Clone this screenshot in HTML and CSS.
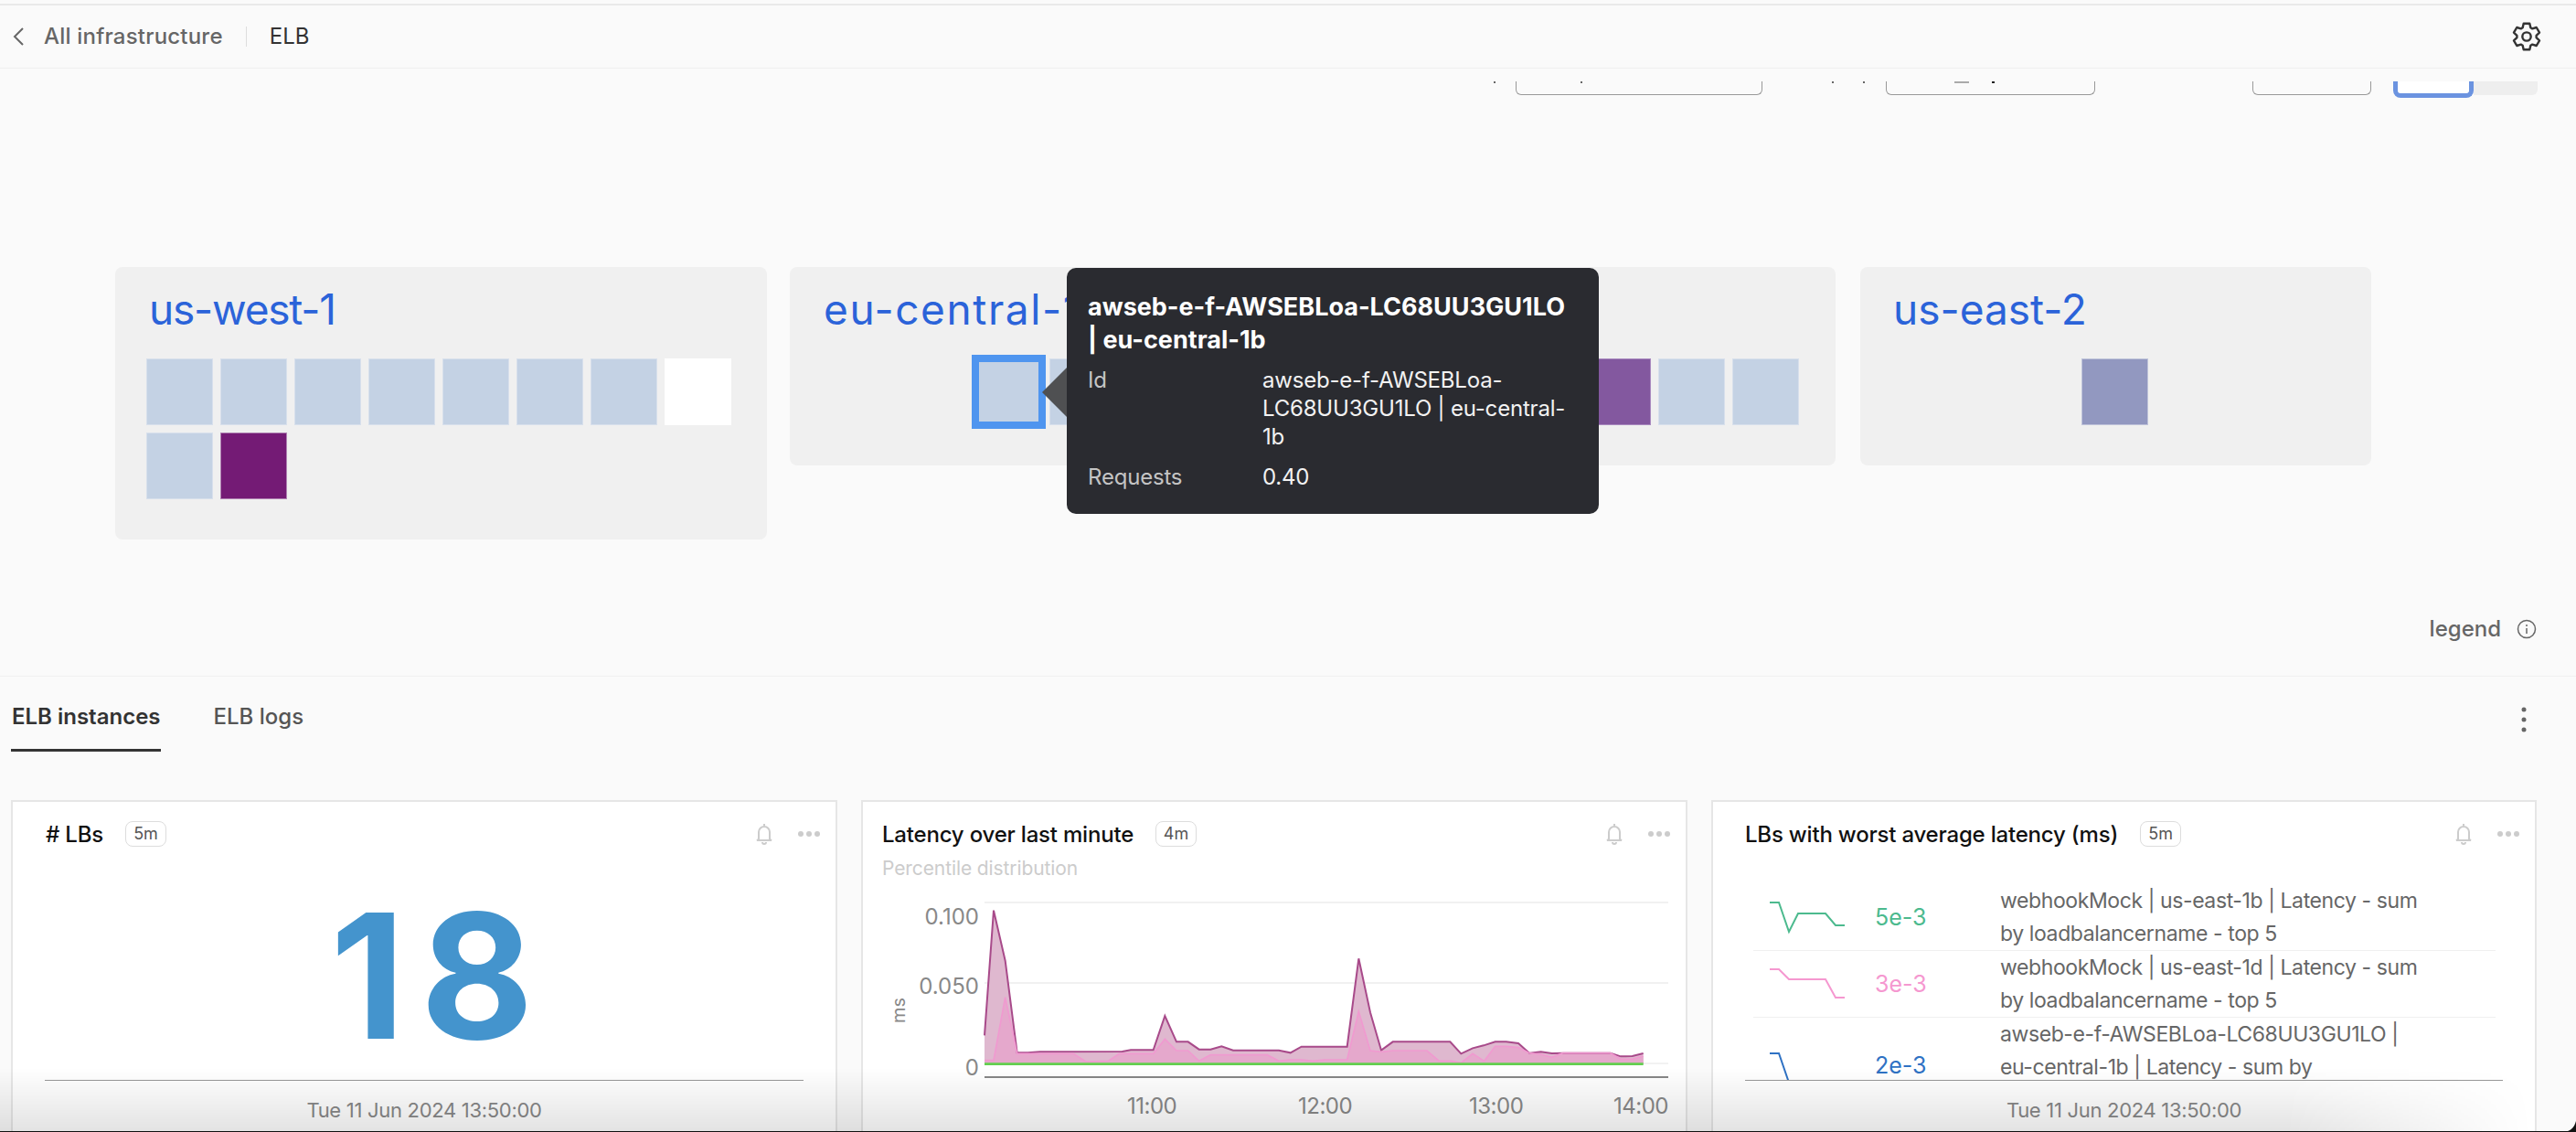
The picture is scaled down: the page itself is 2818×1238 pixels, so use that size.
FILE: index.html
```html
<!DOCTYPE html>
<html lang="en">
<head>
<meta charset="UTF-8">
<meta name="viewport" content="width=device-width, initial-scale=1.0">
<title>ELB</title>
<link rel="stylesheet" href="styles.css">
</head>
<body>
  <div class="page">
    <header class="topbar">
      <svg class="back" width="14" height="20" viewBox="0 0 14 20"><path d="M12 1 3 10l9 9" /></svg>
      <a class="crumb">All infrastructure</a>
      <span class="crumb-sep"></span>
      <span class="crumb-current">ELB</span>
      <svg class="gear" width="32" height="32" viewBox="0 0 24 24"><path d="M9.53 1.28H14.47L15.25 4.69 16.7 5.53 20.04 4.5 22.52 8.78 19.96 11.16V12.84L22.52 15.22 20.04 19.5 16.7 18.47 15.25 19.31 14.47 22.72H9.53L8.75 19.31 7.3 18.47 3.96 19.5 1.48 15.22 4.04 12.84V11.16L1.48 8.78 3.96 4.5 7.3 5.53 8.75 4.69z"/><circle cx="12" cy="12" r="3.5"/></svg>
    </header>

    <div class="toolbar">
      <div class="field field-a"></div>
      <div class="field field-b"></div>
      <div class="field field-c"></div>
      <span class="tick tick-a"></span>
      <span class="tick tick-d"></span>
      <span class="tick tick-b"></span>
      <span class="tick tick-c"></span>
      <span class="tick tick-e"></span>
      <span class="tick tick-f"></span>
      <div class="toggle"><span class="toggle-on"></span><span class="toggle-off"></span></div>
    </div>

    <section class="map">
      <div class="region region-west">
        <h2>us-west-1</h2>
        <div class="cells">
          <i class="cell"></i><i class="cell"></i><i class="cell"></i><i class="cell"></i>
          <i class="cell"></i><i class="cell"></i><i class="cell"></i><i class="cell cell-white"></i>
          <i class="cell"></i><i class="cell cell-purple"></i>
        </div>
      </div>
      <div class="region region-central">
        <h2>eu-central-1</h2>
        <div class="cells-split">
          <div class="cells-group">
            <i class="cell cell-active"></i><i class="cell"></i>
          </div>
          <div class="cells-group">
            <i class="cell cell-mid"></i><i class="cell"></i><i class="cell"></i>
          </div>
        </div>
        <div class="tooltip">
          <span class="tooltip-arrow"></span>
          <div class="tooltip-title">awseb-e-f-AWSEBLoa-LC68UU3GU1LO | eu-central-1b</div>
          <div class="tooltip-row">
            <span class="tooltip-key">Id</span>
            <span>awseb-e-f-AWSEBLoa-LC68UU3GU1LO | eu-central-1b</span>
          </div>
          <div class="tooltip-row">
            <span class="tooltip-key">Requests</span>
            <span>0.40</span>
          </div>
        </div>
      </div>
      <div class="region region-east">
        <h2>us-east-2</h2>
        <div class="cells-center"><i class="cell cell-slate"></i></div>
      </div>
      <div class="legend">
        legend
        <svg width="22" height="22" viewBox="0 0 22 22"><circle cx="11" cy="11" r="9.5"/><path d="M11 10v6M11 6v2"/></svg>
      </div>
    </section>

    <nav class="tabs">
      <a class="tab tab-active">ELB instances</a>
      <a class="tab">ELB logs</a>
      <svg class="kebab" width="8" height="30" viewBox="0 0 8 30"><circle cx="4" cy="4" r="2.5"/><circle cx="4" cy="15" r="2.5"/><circle cx="4" cy="26" r="2.5"/></svg>
    </nav>

    <section class="cards">
      <article class="card card-count">
        <div class="card-head">
          <span class="card-title">#&nbsp;LBs</span>
          <span class="badge">5m</span>
          <svg class="bell" width="20" height="24" viewBox="0 0 20 24"><path d="M10 1v2M4 18V10a6 6 0 0 1 12 0v8l2 1H2zM8 21a2 2 0 0 0 4 0"/></svg>
          <span class="dots"><i></i><i></i><i></i></span>
        </div>
        <div class="big-number">18</div>
        <div class="stamp">Tue 11 Jun 2024 13:50:00</div>
      </article>

      <article class="card card-chart">
        <div class="card-head">
          <span class="card-title">Latency over last minute</span>
          <span class="badge">4m</span>
          <svg class="bell" width="20" height="24" viewBox="0 0 20 24"><path d="M10 1v2M4 18V10a6 6 0 0 1 12 0v8l2 1H2zM8 21a2 2 0 0 0 4 0"/></svg>
          <span class="dots"><i></i><i></i><i></i></span>
        </div>
        <div class="card-sub">Percentile distribution</div>
        <div class="chart">
          <span class="y-title">ms</span>
          <div class="y-labels">
            <span>0.100</span>
            <span>0.050</span>
            <span>0</span>
          </div>
          <div class="plot">
            <svg class="plot-svg" width="748" height="195" viewBox="48 84 2244 585">
              <path class="grid" d="M48 84H2292M48 348H2292"/>
              <path class="grid-zero" d="M48 612H2292"/>
              <polygon class="area-top" points="48,614 48,520 78,110 116,275 155,577 190,577 230,574 500,573 528,568 602,568 640,456 678,541 716,541 752,566 790,566 826,556 864,569 1014,569 1052,577 1088,557 1238,557 1276,268 1314,445 1350,569 1388,541 1576,541 1612,580 1650,562 1686,553 1724,541 1760,541 1800,546 1836,578 1874,574 1910,579 1946,578 2102,578 2136,589 2174,588 2210,579 2210,614"/>
              <polygon class="area-low" points="48,614 48,602 78,602 116,395 155,580 190,580 340,580 380,606 454,604 490,580 602,580 640,532 678,570 716,570 752,604 790,584 976,584 1014,604 1052,600 1088,600 1126,604 1164,600 1238,600 1276,442 1314,570 1350,574 1388,570 1500,570 1540,604 1580,604 1612,610 1650,580 1688,604 1724,556 1760,556 1800,560 1836,578 1874,582 1910,592 1946,578 2102,578 2136,598 2174,598 2210,588 2210,614"/>
              <polyline class="line-top" points="48,520 78,110 116,275 155,577 190,577 230,574 500,573 528,568 602,568 640,456 678,541 716,541 752,566 790,566 826,556 864,569 1014,569 1052,577 1088,557 1238,557 1276,268 1314,445 1350,569 1388,541 1576,541 1612,580 1650,562 1686,553 1724,541 1760,541 1800,546 1836,578 1874,574 1910,579 1946,578 2102,578 2136,589 2174,588 2210,579"/>
              <polyline class="line-low" points="48,602 78,602 116,395 155,580 190,580 340,580 380,606 454,604 490,580 602,580 640,532 678,570 716,570 752,604 790,584 976,584 1014,604 1052,600 1088,600 1126,604 1164,600 1238,600 1276,442 1314,570 1350,574 1388,570 1500,570 1540,604 1580,604 1612,610 1650,580 1688,604 1724,556 1760,556 1800,560 1836,578 1874,582 1910,592 1946,578 2102,578 2136,598 2174,598 2210,588"/>
              <path class="line-green" d="M48 614H2210"/>
            </svg>
            <div class="x-labels">
              <span>11:00</span><span>12:00</span><span>13:00</span><span>14:00</span>
            </div>
          </div>
        </div>
      </article>

      <article class="card card-list">
        <div class="card-head">
          <span class="card-title">LBs with worst average latency (ms)</span>
          <span class="badge">5m</span>
          <svg class="bell" width="20" height="24" viewBox="0 0 20 24"><path d="M10 1v2M4 18V10a6 6 0 0 1 12 0v8l2 1H2zM8 21a2 2 0 0 0 4 0"/></svg>
          <span class="dots"><i></i><i></i><i></i></span>
        </div>
        <div class="list">
          <div class="list-row">
            <svg class="spark spark-green" width="82" height="34" viewBox="0 0 82 34"><polyline points="0,1 10,1 21,33 31,13 61,13 72,26 82,26"/></svg>
            <span class="list-value value-green">5e-3</span>
            <span class="list-name">webhookMock | us-east-1b | Latency - sum by loadbalancername - top 5</span>
          </div>
          <div class="list-row">
            <svg class="spark spark-pink" width="82" height="34" viewBox="0 0 82 34"><polyline points="0,1 10,1 21,12 61,12 72,32 82,32"/></svg>
            <span class="list-value value-pink">3e-3</span>
            <span class="list-name">webhookMock | us-east-1d | Latency - sum by loadbalancername - top 5</span>
          </div>
          <div class="list-row">
            <svg class="spark spark-blue" width="82" height="34" viewBox="0 0 82 34"><polyline points="0,1 10,1 21,33 82,33"/></svg>
            <span class="list-value value-blue">2e-3</span>
            <span class="list-name">awseb-e-f-AWSEBLoa-LC68UU3GU1LO |<br>eu-central-1b | Latency - sum by</span>
          </div>
        </div>
        <div class="stamp">Tue 11 Jun 2024 13:50:00</div>
      </article>
    </section>

    <div class="fade"></div>
    <svg class="corner" width="15" height="12" viewBox="0 0 15 12"><path d="M15 0v12H0C8 12 13 8 15 0z"/></svg>
  </div>
</body>
</html>
```

FILE: styles.css
```css
* {
  box-sizing: border-box;
}

html,
body {
  margin: 0;
  padding: 0;
}

body {
  font-family: Inter, "Liberation Sans", sans-serif;
  background: #fafafa;
  color: #333;
}

.page {
  position: relative;
  width: 2818px;
  height: 1238px;
  overflow: hidden;
  padding-top: 4px;
  background: #fafafa;
}

/* top bar */
.topbar {
  display: flex;
  align-items: center;
  height: 71px;
  padding: 0 38px 1px 13px;
  border-top: 2px solid #e9e9e9;
  border-bottom: 1px solid #efefef;
}

.back {
  margin-right: 21px;
}

.back path {
  fill: none;
  stroke: #666;
  stroke-width: 2;
}

.crumb {
  font-size: 24px;
  letter-spacing: 0.2px;
  color: #666;
  font-weight: 500;
}

.crumb-sep {
  width: 1px;
  height: 22px;
  margin: 0 25px;
  background: #ddd;
}

.crumb-current {
  font-size: 24px;
  color: #333;
  font-weight: 400;
}

.gear {
  margin-left: auto;
}

.gear path,
.gear circle {
  fill: none;
  stroke: #333;
  stroke-width: 1.8;
  stroke-linejoin: round;
}

/* toolbar, mostly scrolled out of view */
.toolbar {
  position: relative;
  height: 33px;
}

.toolbar .field,
.toolbar .toggle {
  position: absolute;
  top: 14px;
}

.field {
  height: 15px;
  border: 1px solid #999;
  border-top: 0;
  border-radius: 0 0 6px 6px;
}

.field-a {
  left: 1658px;
  width: 270px;
}

.field-b {
  left: 2063px;
  width: 229px;
}

.field-c {
  left: 2464px;
  width: 130px;
}

.tick {
  position: absolute;
  top: 14px;
  width: 2px;
  height: 2px;
  background: #666;
}

.tick-a {
  left: 1634px;
}

.tick-d {
  left: 1729px;
}

.tick-b {
  left: 2004px;
}

.tick-c {
  left: 2038px;
}

.tick-e {
  left: 2138px;
  width: 16px;
  background: #aaa;
}

.tick-f {
  left: 2179px;
  width: 3px;
  background: #222;
}

.toggle {
  left: 2618px;
  display: flex;
  align-items: flex-start;
}

.toggle-on {
  width: 88px;
  height: 18px;
  border: 5px solid #6b93e0;
  border-top: 0;
  border-radius: 0 0 8px 8px;
  background: #fff;
}

.toggle-off {
  width: 70px;
  height: 15px;
  border-radius: 0 0 6px 0;
  background: #eee;
}

/* region map */
.map {
  position: relative;
  display: flex;
  align-items: flex-start;
  height: 632px;
  padding: 184px 0 0 126px;
  border-bottom: 1px solid #f0f0f0;
}

.region {
  position: relative;
  flex: none;
  padding: 18px 0 0 34px;
  border-radius: 8px;
  background: #f0f0f0;
}

.region h2 {
  margin: 0;
  font-size: 46px;
  line-height: 56px;
  font-weight: 400;
  color: #2b63d9;
}

.region-west {
  width: 713px;
  height: 298px;
  margin-right: 25px;
  padding-left: 37px;
}

.region-west h2 {
  letter-spacing: -1.2px;
}

.region-central {
  width: 1144px;
  height: 217px;
  margin-right: 27px;
  padding-left: 37px;
}

.region-central h2 {
  letter-spacing: 1.6px;
}

.region-east {
  width: 559px;
  height: 217px;
  padding-left: 36px;
}

.cells {
  display: flex;
  flex-wrap: wrap;
  gap: 8px;
  width: 640px;
  margin: 26px 0 0 -3px;
}

.cell {
  display: block;
  flex: none;
  width: 73px;
  height: 73px;
  background: #c4d2e4;
  border: 1px solid #d8e0ec;
}

.cell-white {
  background: #fff;
  border-color: #fff;
}

.cell-purple {
  background: #741b75;
  border-color: #b083b3;
}

.cell-mid {
  background: #83589f;
  border-color: #a98abf;
}

.cell-slate {
  background: #9298c0;
  border-color: #c0c4da;
}

.cell-active {
  outline: 8px solid #4f95ef;
  outline-offset: -4px;
}

.cells-split {
  display: flex;
  justify-content: space-between;
  margin: 26px 40px 0 166px;
}

.cells-group {
  display: flex;
  gap: 8px;
}

.cells-center {
  display: flex;
  margin-top: 26px;
  padding-left: 206px;
}

/* tooltip over the central region */
.tooltip {
  position: absolute;
  left: 303px;
  top: 1px;
  z-index: 2;
  width: 582px;
  height: 269px;
  padding: 25px 30px 0 23px;
  border-radius: 10px;
  background: #2a2b30;
  color: #f2f2f2;
  font-size: 24px;
  letter-spacing: -0.2px;
}

.tooltip-arrow {
  position: absolute;
  left: -27px;
  top: 109px;
  border-style: solid;
  border-width: 27px 27px 27px 0;
  border-color: transparent #4f5052 transparent transparent;
}

.tooltip-title {
  margin-bottom: 10px;
  font-size: 27px;
  line-height: 36px;
  letter-spacing: 0;
  font-weight: 700;
  color: #fff;
}

.tooltip-row {
  display: grid;
  grid-template-columns: 191px 1fr;
  margin-bottom: 13px;
  line-height: 31px;
}

.tooltip-key {
  color: #c4c4c4;
}

.legend {
  position: absolute;
  right: 43px;
  top: 565px;
  display: flex;
  align-items: center;
  gap: 17px;
  font-size: 24px;
  font-weight: 500;
  color: #666;
}

.legend svg {
  fill: none;
  stroke: #666;
  stroke-width: 1.5;
}

/* tabs */
.tabs {
  position: relative;
  display: flex;
  align-items: flex-start;
  gap: 58px;
  height: 135px;
  padding: 29px 0 0 12px;
}

.tab {
  height: 53px;
  font-size: 24px;
  line-height: 30px;
  font-weight: 500;
  color: #555;
}

.tab-active {
  padding-left: 1px;
  font-weight: 600;
  color: #333;
  border-bottom: 3px solid #333;
}

.kebab {
  margin: 3px 53px 0 auto;
  fill: #666;
}

/* cards */
.cards {
  display: grid;
  grid-template-columns: 904px 904px 903px;
  column-gap: 26px;
  padding-left: 12px;
}

.card {
  position: relative;
  height: 380px;
  background: #fff;
  border: 2px solid #e6e6e6;
  border-bottom: 0;
  overflow: hidden;
}

.card-head {
  display: flex;
  align-items: center;
  height: 28px;
  margin-top: 21px;
  padding-right: 17px;
}

.card-count .card-head {
  padding-left: 36px;
}

.card-chart .card-head,
.card-chart .card-sub {
  padding-left: 21px;
}

.card-list .card-head {
  padding-left: 35px;
}

.card-title {
  font-size: 24px;
  letter-spacing: -0.2px;
  font-weight: 500;
  color: #111;
}

.badge {
  width: 45px;
  height: 28px;
  margin-left: 24px;
  border: 1px solid #ddd;
  border-radius: 8px;
  font-size: 18px;
  line-height: 26px;
  text-align: center;
  color: #555;
}

.bell {
  margin-left: auto;
  fill: none;
  stroke: #ccc;
  stroke-width: 2;
}

.dots {
  display: flex;
  gap: 3px;
  margin-left: 27px;
}

.dots i {
  width: 6px;
  height: 6px;
  border-radius: 50%;
  background: #ccc;
}

.card-sub {
  margin-top: 10px;
  font-size: 21px;
  line-height: 28px;
  letter-spacing: -0.1px;
  color: #ccc;
}

.big-number {
  margin-top: 38px;
  height: 206px;
  padding-left: 34px;
  font-size: 190px;
  line-height: 206px;
  letter-spacing: 17px;
  font-weight: 700;
  text-align: center;
  color: #4494cd;
}

.stamp {
  position: absolute;
  left: 35px;
  right: 35px;
  top: 304px;
  height: 70px;
  padding-top: 18px;
  border-top: 1px solid #999;
  background: #fff;
  font-size: 22px;
  line-height: 28px;
  letter-spacing: -0.3px;
  text-align: center;
  color: #888;
}

/* line chart */
.chart {
  position: relative;
  display: flex;
  height: 240px;
  margin-top: 23px;
}

.y-title {
  position: absolute;
  left: 25px;
  top: 106px;
  transform: rotate(-90deg);
  font-size: 20px;
  color: #888;
}

.y-labels {
  position: relative;
  width: 133px;
}

.y-labels span {
  position: absolute;
  right: 6px;
  font-size: 24px;
  line-height: 30px;
  color: #888;
}

.y-labels span:nth-child(1) {
  top: 1px;
}

.y-labels span:nth-child(2) {
  top: 77px;
}

.y-labels span:nth-child(3) {
  top: 166px;
}

.plot {
  width: 748px;
}

.plot-svg {
  display: block;
  overflow: visible;
}

.grid {
  fill: none;
  stroke: #f1f1f1;
  stroke-width: 6;
}

.grid-zero {
  fill: none;
  stroke: #e4e4e4;
  stroke-width: 3;
}

.area-top {
  fill: #dfb8cf;
}

.area-low {
  fill: #e5a8cc;
}

.line-top {
  fill: none;
  stroke: #a84a8a;
  stroke-width: 6;
}

.line-low {
  fill: none;
  stroke: #f09ad0;
  stroke-width: 5;
}

.line-green {
  fill: none;
  stroke: #63cf4f;
  stroke-width: 8;
}

.x-labels {
  position: relative;
  height: 40px;
  margin-top: 8px;
  font-size: 24px;
  line-height: 30px;
  letter-spacing: -0.5px;
  color: #888;
}

.x-labels::before {
  content: "";
  position: absolute;
  left: 0;
  right: 0;
  top: -13px;
  height: 2px;
  background: #888;
}

.x-labels span {
  position: absolute;
  top: 5px;
}

.x-labels span:nth-child(1) {
  left: 156px;
}

.x-labels span:nth-child(2) {
  left: 343px;
}

.x-labels span:nth-child(3) {
  left: 530px;
}

.x-labels span:nth-child(4) {
  right: 0;
}

/* list of load balancers */
.list {
  height: 280px;
  margin: 41px 43px 0 44px;
  overflow: hidden;
}

.list-row {
  display: grid;
  grid-template-columns: 133px 137px 1fr;
  align-items: center;
  height: 73px;
  border-bottom: 1px solid #f0f0f0;
}

.list-row:last-child {
  height: 108px;
  align-items: flex-start;
  border-bottom: 0;
}

.spark {
  margin-left: 18px;
  overflow: visible;
}

.spark polyline {
  fill: none;
  stroke-width: 2;
}

.spark-green polyline {
  stroke: #4cba8e;
}

.spark-pink polyline {
  stroke: #f598d0;
}

.spark-blue polyline {
  stroke: #2f72c4;
}

.list-row:last-child .spark {
  margin-top: 38px;
}

.list-row:last-child .list-value {
  margin-top: 37px;
}

.list-value {
  font-size: 25px;
  font-weight: 400;
}

.value-green {
  color: #4cba8e;
}

.value-pink {
  color: #f598d0;
}

.value-blue {
  color: #2f72c4;
}

.list-name {
  width: 485px;
  font-size: 23px;
  line-height: 36px;
  letter-spacing: -0.4px;
  color: #666;
}

/* window edge */
.fade {
  position: absolute;
  left: 0;
  right: 0;
  bottom: 0;
  height: 70px;
  background: linear-gradient(to bottom, rgba(0, 0, 0, 0), rgba(0, 0, 0, 0.11));
  -webkit-mask-image: linear-gradient(to right, #000 2500px, transparent 2770px);
  mask-image: linear-gradient(to right, #000 2500px, transparent 2770px);
  pointer-events: none;
}

.page::after {
  content: "";
  position: absolute;
  left: 0;
  right: 0;
  bottom: 0;
  height: 1px;
  background: #111;
}

.corner {
  position: absolute;
  right: 0;
  bottom: 0;
  fill: #111;
}
```
